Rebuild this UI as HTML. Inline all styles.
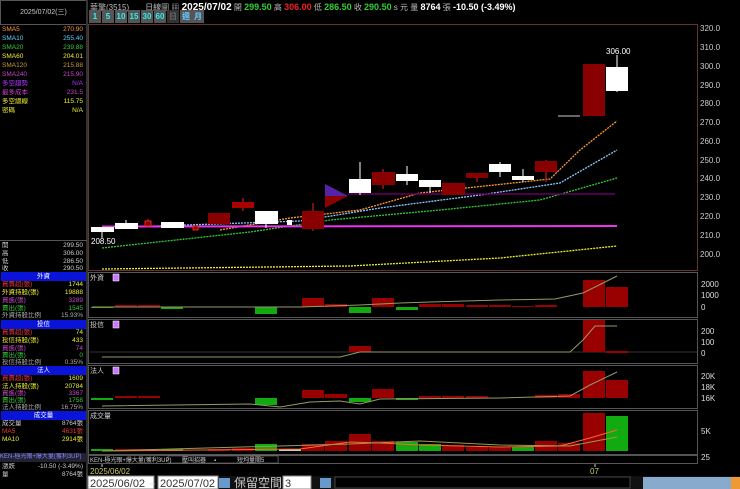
<!DOCTYPE html>
<html><head><meta charset="utf-8"><style>
*{margin:0;padding:0;box-sizing:border-box}
body{width:740px;height:489px;background:#000;overflow:hidden;position:relative;font-family:"Liberation Sans","Noto Sans CJK TC",sans-serif;font-size:8px;color:#ccc}
.a{position:absolute;white-space:nowrap}
.row{position:absolute;left:2px;width:84px;height:8px;font-size:6.5px;line-height:8px;overflow:hidden}
.row span{position:absolute;right:3px}
.hd{position:absolute;left:1px;width:85px;height:9px;background:#0a14d8;color:#fff;text-align:center;font-size:6.5px;line-height:9px}
.btn{position:absolute;top:10px;width:12px;height:13px;background:#555;color:#3ee;font-weight:bold;font-size:8px;line-height:13px;text-align:center}
</style></head><body>
<div class="a" style="left:0;top:0;width:87px;height:25px;border:1px solid #555;color:#ccc;text-align:center;line-height:23px;font-size:7px">2025/07/02(三)</div>
<div class="a" style="left:86px;top:0;width:2px;height:489px;background:#333"></div>
<div class="row" style="top:26px;color:#f93">SMA5<span>270.90</span></div>
<div class="row" style="top:35px;color:#6cf">SMA10<span>255.40</span></div>
<div class="row" style="top:44px;color:#3c3">SMA20<span>239.88</span></div>
<div class="row" style="top:53px;color:#ee3">SMA60<span>204.01</span></div>
<div class="row" style="top:62px;color:#c93">SMA120<span>215.88</span></div>
<div class="row" style="top:71px;color:#c4c">SMA240<span>215.90</span></div>
<div class="row" style="top:80px;color:#a3f">多空趨勢<span>N/A</span></div>
<div class="row" style="top:89px;color:#c4c">最多成本<span>231.5</span></div>
<div class="row" style="top:98px;color:#ee3">多空總線<span>115.75</span></div>
<div class="row" style="top:107px;color:#ee3">密碼<span>N/A</span></div>
<div class="a" style="left:0;top:240px;width:87px;height:1px;background:#555"></div>
<div class="row" style="top:242px">開<span>299.50</span></div>
<div class="row" style="top:250px">高<span>306.00</span></div>
<div class="row" style="top:258px">低<span>286.50</span></div>
<div class="row" style="top:265px">收<span>290.50</span></div>
<div class="hd" style="top:272px">外資</div>
<div class="row" style="top:281px;color:#e33">買賣超(張)<span style="color:#ee3">1744</span></div>
<div class="row" style="top:289px;color:#ee3">外資持股(張)<span>19888</span></div>
<div class="row" style="top:297px;color:#c4c">買進(張)<span>3289</span></div>
<div class="row" style="top:305px;color:#3c3">賣出(張)<span>1545</span></div>
<div class="row" style="top:312px;color:#aaa">外資持股比例<span>15.93%</span></div>
<div class="hd" style="top:320px">投信</div>
<div class="row" style="top:329px;color:#e33">買賣超(張)<span style="color:#ee3">74</span></div>
<div class="row" style="top:337px;color:#ee3">投信持股(張)<span>433</span></div>
<div class="row" style="top:345px;color:#c4c">買進(張)<span>74</span></div>
<div class="row" style="top:352px;color:#3c3">賣出(張)<span>0</span></div>
<div class="row" style="top:359px;color:#aaa">投信持股比例<span>0.35%</span></div>
<div class="hd" style="top:366px">法人</div>
<div class="row" style="top:375px;color:#e33">買賣超(張)<span style="color:#ee3">1609</span></div>
<div class="row" style="top:383px;color:#ee3">法人持股(張)<span>20784</span></div>
<div class="row" style="top:390px;color:#c4c">買進(張)<span>3367</span></div>
<div class="row" style="top:397px;color:#3c3">賣出(張)<span>1758</span></div>
<div class="row" style="top:404px;color:#aaa">法人持股比例<span>16.75%</span></div>
<div class="hd" style="top:411px">成交量</div>
<div class="row" style="top:420px;color:#ccc">成交量<span>8764張</span></div>
<div class="row" style="top:428px;color:#e33">MA5<span style="color:#e33">4631張</span></div>
<div class="row" style="top:436px;color:#ee3">MA10<span style="color:#ee3">2914張</span></div>
<div class="a" style="left:0;top:453px;width:87px;height:9px;background:#223;color:#88f;font-size:6px;line-height:9px;overflow:hidden">KEN-極光眼+爆大量(獲利3UP)</div>
<div class="row" style="top:463px">漲跌<span>-10.50 (-3.49%)</span></div>
<div class="row" style="top:471px">量<span>8764張</span></div>

<div class="a" style="left:90px;top:2px;font-size:8px;color:#bbb">華擎(3515)　　日線圖 ▦ <b style="color:#fff;font-size:10px">2025/07/02</b> 開 <b style="color:#3c3;font-size:9px">299.50</b> 高 <b style="color:#e22;font-size:9px">306.00</b> 低 <b style="color:#3c3;font-size:9px">286.50</b> 收 <b style="color:#3c3;font-size:9px">290.50</b> s 元 量 <b style="color:#fff;font-size:9px">8764</b> 張 <b style="color:#fff;font-size:9px">-10.50 (-3.49%)</b></div>
<div class="btn" style="left:89px">1</div><div class="btn" style="left:102px">5</div><div class="btn" style="left:115px;width:12px">10</div><div class="btn" style="left:128px">15</div><div class="btn" style="left:141px">30</div><div class="btn" style="left:154px">60</div><div class="btn" style="left:167px;background:#333;color:#666">日</div><div class="btn" style="left:180px;color:#6cf">週</div><div class="btn" style="left:192px;color:#6cf">月</div>

<svg class="a" style="left:0;top:0" width="740" height="489">
<rect x="88.5" y="24.5" width="609" height="246" fill="none" stroke="#633" />
<g fill="#ccc" font-size="8" font-family="Liberation Sans">
<text x="700" y="31">320.0</text><text x="700" y="50">310.0</text><text x="700" y="69">300.0</text><text x="700" y="88">290.0</text><text x="700" y="106">280.0</text><text x="700" y="125">270.0</text><text x="700" y="144">260.0</text><text x="700" y="163">250.0</text><text x="700" y="181">240.0</text><text x="700" y="200">230.0</text><text x="700" y="219">220.0</text><text x="700" y="238">210.0</text><text x="700" y="257">200.0</text>
<text x="606" y="54" fill="#fff">306.00</text><text x="91" y="244" fill="#fff">208.50</text>
</g>
<polyline points="102,269 350,266 500,258 617,246" fill="none" stroke="#ee3" stroke-width="1.3" stroke-dasharray="2,1"/>
<polyline points="102,248 250,232 330,220 440,210 540,200 617,178" fill="none" stroke="#3c3" stroke-width="1.3" stroke-dasharray="2,1"/>
<polyline points="100,228 300,221 380,208 480,195 560,183 617,150" fill="none" stroke="#8cf" stroke-width="1.3" stroke-dasharray="2,1"/>
<polyline points="220,230 290,218 360,210 420,193 550,179 580,150 617,121" fill="none" stroke="#f93" stroke-width="1.3" stroke-dasharray="2,1"/>
<line x1="102" y1="226.5" x2="617" y2="226" stroke="#e3e" stroke-width="2"/>
<line x1="348" y1="194" x2="615" y2="194" stroke="#606" stroke-width="1.5"/>
<g fill="#fff" stroke="#fff">
<line x1="102" y1="227" x2="102" y2="238"/><rect x="91" y="227" width="23" height="5" stroke="none"/>
<line x1="126" y1="220" x2="126" y2="229"/><rect x="115" y="223" width="23" height="6" stroke="none"/>
<rect x="161" y="222" width="23" height="6" stroke="none"/>
<line x1="266" y1="224" x2="266" y2="228"/><rect x="255" y="211" width="23" height="13" stroke="none"/>
<rect x="287" y="220" width="5" height="5" stroke="none"/>
<line x1="360" y1="162" x2="360" y2="195"/><rect x="349" y="179" width="22" height="14" stroke="none"/>
<line x1="407" y1="166" x2="407" y2="185"/><rect x="396" y="174" width="22" height="7" stroke="none"/>
<line x1="430" y1="180" x2="430" y2="193"/><rect x="419" y="180" width="22" height="7" stroke="none"/>
<line x1="500" y1="162" x2="500" y2="177"/><rect x="489" y="164" width="22" height="8" stroke="none"/>
<line x1="523" y1="169" x2="523" y2="182"/><rect x="512" y="176" width="22" height="4" stroke="none"/>
<line x1="617" y1="55" x2="617" y2="92"/><rect x="606" y="67" width="22" height="24" stroke="none"/>
</g>
<g fill="#800" stroke="#e22">
<line x1="148" y1="219" x2="148" y2="227"/><rect x="145" y="221" width="6" height="5"/>
<rect x="193" y="226" width="5" height="4"/>
<rect x="208" y="213" width="22" height="11" stroke="none"/>
<line x1="243" y1="198" x2="243" y2="211"/><rect x="232" y="202" width="22" height="6" stroke="none" fill="#a00"/>
<line x1="313" y1="203" x2="313" y2="231"/><rect x="302" y="211" width="22" height="18" stroke="none"/>
<line x1="383" y1="169" x2="383" y2="189"/><rect x="372" y="172" width="23" height="13" stroke="none"/>
<rect x="442" y="183" width="23" height="12" stroke="none"/>
<line x1="477" y1="173" x2="477" y2="182"/><rect x="466" y="173" width="22" height="5" stroke="none"/>
<line x1="546" y1="160" x2="546" y2="182"/><rect x="535" y="161" width="22" height="11" stroke="none"/>
<rect x="583" y="64" width="22" height="52" stroke="none"/>
</g>
<polygon points="325,184 348,196 325,208" fill="#8b0000"/><polygon points="325,184 348,196 325,196" fill="#52a"/>
<line x1="558" y1="116" x2="580" y2="116" stroke="#ccc"/>

<g fill="none" stroke="#555">
<rect x="88.5" y="272.5" width="609" height="45"/><rect x="88.5" y="319.5" width="609" height="44"/><rect x="88.5" y="365.5" width="609" height="43"/><rect x="88.5" y="410.5" width="609" height="44"/><rect x="88.5" y="455.5" width="609" height="8"/>
</g>
<g font-size="7" fill="#ccc"><text x="90" y="280">外資</text><text x="90" y="327">投信</text><text x="90" y="373">法人</text><text x="90" y="418">成交量</text></g>
<g fill="#c7f" stroke="#fff" stroke-width=".5"><rect x="113" y="274" width="6" height="7"/><rect x="113" y="321" width="6" height="7"/><rect x="113" y="367" width="6" height="7"/></g>
<g font-size="8" fill="#ddd" font-family="Liberation Sans"><text x="701" y="287">2000</text><text x="701" y="298">1000</text><text x="701" y="310">0</text><text x="701" y="334">200</text><text x="701" y="345">100</text><text x="701" y="356">0</text><text x="701" y="379">20K</text><text x="701" y="390">18K</text><text x="701" y="401">16K</text><text x="701" y="434">5K</text><text x="701" y="460">25</text></g>
<g fill="#900"><rect x="115" y="305" width="22" height="2"/><rect x="138" y="305" width="22" height="2"/><rect x="302" y="298" width="22" height="9"/><rect x="325" y="304" width="22" height="3"/><rect x="372" y="298" width="22" height="9"/><rect x="419" y="304" width="22" height="3"/><rect x="442" y="304" width="22" height="3"/><rect x="466" y="305" width="22" height="2"/><rect x="489" y="305" width="22" height="2"/><rect x="512" y="306" width="22" height="1"/><rect x="535" y="305" width="22" height="2"/><rect x="583" y="280" width="22" height="27"/><rect x="606" y="287" width="22" height="20"/></g>
<g fill="#1a1"><rect x="91" y="307" width="22" height="1"/><rect x="161" y="307" width="22" height="2"/><rect x="255" y="307" width="22" height="7"/><rect x="349" y="307" width="22" height="6"/><rect x="396" y="307" width="22" height="3"/></g>
<polyline points="92,307 300,307 360,305 400,303 430,302 500,300 555,299 583,293 605,282 617,276" fill="none" stroke="#996" stroke-width="1"/>
<line x1="90" y1="352" x2="697" y2="352" stroke="#333"/>
<g fill="#900"><rect x="349" y="346" width="22" height="6"/><rect x="583" y="320" width="22" height="32"/><rect x="606" y="351" width="22" height="2"/></g>
<polyline points="102,357 340,357 360,352 570,352 583,340 595,326 617,326" fill="none" stroke="#996"/>
<g fill="#900"><rect x="115" y="396" width="22" height="2"/><rect x="138" y="396" width="22" height="2"/><rect x="302" y="390" width="22" height="8"/><rect x="325" y="394" width="22" height="4"/><rect x="372" y="389" width="22" height="9"/><rect x="419" y="396" width="22" height="2"/><rect x="442" y="396" width="22" height="2"/><rect x="466" y="396" width="22" height="2"/><rect x="535" y="395" width="22" height="3"/><rect x="558" y="394" width="22" height="4"/><rect x="583" y="371" width="22" height="27"/><rect x="606" y="380" width="22" height="18"/></g>
<g fill="#1a1"><rect x="91" y="398" width="22" height="2"/><rect x="255" y="398" width="22" height="7"/><rect x="349" y="398" width="22" height="4"/><rect x="396" y="398" width="22" height="2"/></g>
<polyline points="102,406 250,404 280,407 310,402 340,401 360,404 380,399 500,398 570,396 590,385 617,372" fill="none" stroke="#996"/>
<g fill="#900"><rect x="115" y="449" width="22" height="2"/><rect x="138" y="449" width="22" height="2"/><rect x="208" y="449" width="22" height="2"/><rect x="232" y="448" width="22" height="3"/><rect x="302" y="444" width="22" height="7"/><rect x="325" y="441" width="22" height="10"/><rect x="349" y="434" width="22" height="17"/><rect x="372" y="441" width="22" height="10"/><rect x="442" y="445" width="22" height="6"/><rect x="466" y="447" width="22" height="4"/><rect x="489" y="447" width="22" height="4"/><rect x="535" y="441" width="22" height="10"/><rect x="558" y="443" width="22" height="8"/><rect x="583" y="413" width="22" height="38"/></g>
<g fill="#1a1"><rect x="91" y="449" width="22" height="2"/><rect x="161" y="449" width="22" height="2"/><rect x="255" y="444" width="22" height="7"/><rect x="396" y="442" width="22" height="9"/><rect x="419" y="444" width="22" height="7"/><rect x="512" y="447" width="22" height="4"/><rect x="606" y="416" width="22" height="35"/></g>
<rect x="279" y="449" width="22" height="2" fill="#ccc"/>
<polyline points="102,451 300,449 350,442 380,443 420,445 500,447 560,446 590,438 617,430" fill="none" stroke="#f63"/>
<polyline points="102,451 350,444 420,441 500,445 570,446 617,437" fill="none" stroke="#995"/>
<rect x="168" y="456" width="110" height="7" fill="#000" stroke="#888" stroke-width=".5"/><rect x="248" y="456" width="30" height="7" fill="#000" stroke="#888" stroke-width=".5"/>
<g font-size="6" fill="#ccc"><text x="90" y="462">KEN-極光眼+爆大量(獲利3UP)</text><text x="182" y="462">壓叫招器</text><text x="214" y="462">▪</text><text x="237" y="462">短均量關5</text></g>
<line x1="102" y1="464" x2="102" y2="467" stroke="#ccc"/><line x1="595" y1="464" x2="595" y2="467" stroke="#ccc"/>
<text x="90" y="474" font-size="8" fill="#cc6">2025/06/02</text><text x="590" y="474" font-size="8" fill="#cc6">07</text>
<rect x="88" y="476" width="652" height="13" fill="#111"/>
<rect x="88" y="476" width="66" height="13" fill="#fff" stroke="#888"/><rect x="158" y="476" width="60" height="13" fill="#fff" stroke="#888"/><rect x="283" y="476" width="28" height="13" fill="#fff" stroke="#888"/>
<g font-size="11" fill="#333" font-family="Liberation Sans"><text x="90" y="487">2025/06/02</text><text x="160" y="487">2025/07/02</text><text x="285" y="487">3</text></g>
<text x="150" y="487" font-size="9" fill="#ccc">~</text>
<text x="234" y="487" font-size="12" fill="#ccc">保留空間</text>
<rect x="219" y="478" width="11" height="10" fill="#69c"/><rect x="320" y="478" width="11" height="10" fill="#69c"/>
<rect x="335" y="477" width="295" height="11" fill="#000" stroke="#444"/>
<rect x="643" y="477" width="97" height="12" fill="#8ac"/>
<rect x="731" y="477" width="9" height="12" fill="#e93"/>
</svg>
</body></html>
